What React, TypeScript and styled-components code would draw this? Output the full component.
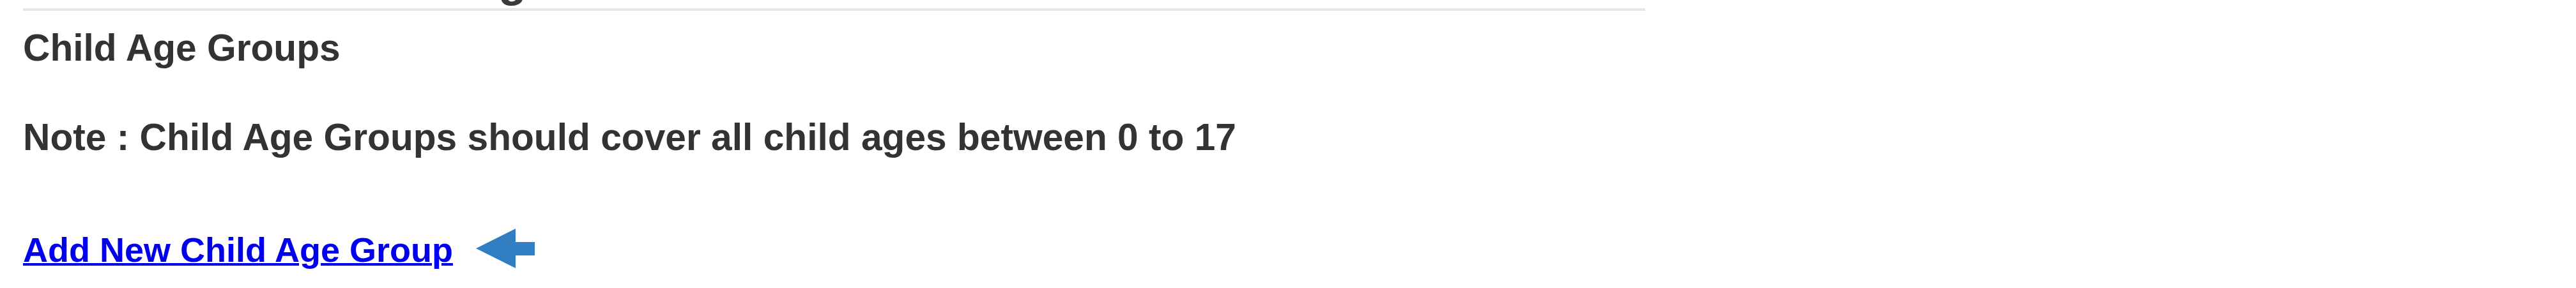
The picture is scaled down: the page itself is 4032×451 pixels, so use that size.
import styled, { createGlobalStyle } from "styled-components";

const GlobalStyle = createGlobalStyle`
  html, body {
    margin: 0;
    padding: 0;
    background: #ffffff;
  }
  body {
    font-family: "Liberation Sans", Arial, sans-serif;
    color: #333333;
  }
`;

const Page = styled.div`
  width: 4032px;
  height: 451px;
  overflow: hidden;
  background: #ffffff;
`;

// bottom of the previous section, only its descender peeks out
const PrevSection = styled.div`
  height: 13px;
  overflow: hidden;
  padding-left: 780px;
`;

const PrevTitle = styled.span`
  display: block;
  margin-top: -67px;
  font-size: 72px;
  line-height: 1;
  font-weight: 700;
  color: #3a3a3a;
`;

const Divider = styled.hr`
  margin: 0 0 0 36px;
  width: 2539px;
  height: 4px;
  border: none;
  background: #e6e6e6;
`;

const Section = styled.div`
  padding-left: 36px;
  display: flex;
  flex-direction: column;
`;

const Title = styled.h3<{ $gap: number }>`
  margin: ${({ $gap }) => $gap}px 0 0;
  font-size: 58.7px;
  line-height: 1;
  font-weight: 700;
  color: #333333;
  white-space: nowrap;
`;

const ActionRow = styled.div`
  margin-top: 118px;
  display: flex;
  align-items: center;
  gap: 36px;
`;

const AddLink = styled.a`
  font-size: 54px;
  line-height: 1;
  font-weight: 700;
  color: #0000ee;
  text-decoration: underline;
  text-decoration-thickness: 4px;
  white-space: nowrap;
  cursor: pointer;
`;

const Pointer = styled.svg`
  display: block;
  flex: none;
  margin-top: -4px;
`;

const App = () => {
  return (
    <Page>
      <GlobalStyle />
      <PrevSection>
        <PrevTitle>g</PrevTitle>
      </PrevSection>
      <Divider />
      <Section>
        <Title $gap={29}>Child Age Groups</Title>
        <Title $gap={81}>
          Note : Child Age Groups should cover all child ages between 0 to 17
        </Title>
        <ActionRow>
          <AddLink href="#">Add New Child Age Group</AddLink>
          <Pointer width="92" height="62" viewBox="0 0 92 62">
            <polygon
              points="0,31 62,0 62,21 92,21 92,42 62,42 62,62"
              fill="#317fc2"
            />
          </Pointer>
        </ActionRow>
      </Section>
    </Page>
  );
};

export default App;
